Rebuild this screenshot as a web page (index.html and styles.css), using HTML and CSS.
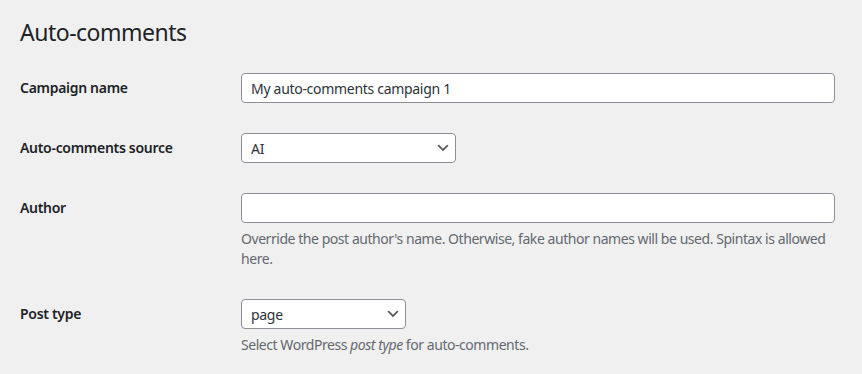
FILE: index.html
```html
<!DOCTYPE html>
<html lang="en">
<head>
  <meta charset="UTF-8">
  <meta name="viewport" content="width=device-width, initial-scale=1.0">
  <title>Auto-comments</title>
  <link rel="stylesheet" href="styles.css">
</head>
<body>
  <div class="wrap">
    <h1>Auto-comments</h1>

    <form class="form-table">
      <div class="row">
        <label class="row-label" for="campaign-name">Campaign name</label>
        <div class="row-field">
          <input class="text-input wide" id="campaign-name" type="text" value="My auto-comments campaign 1">
        </div>
      </div>

      <div class="row">
        <label class="row-label" for="source">Auto-comments source</label>
        <div class="row-field">
          <div class="select-box source">
            <select id="source">
              <option selected>AI</option>
              <option>Templates</option>
            </select>
            <svg class="chevron" viewBox="0 0 20 20"><path d="M5 6l5 5 5-5 2 1-7 7-7-7 2-1z"/></svg>
          </div>
        </div>
      </div>

      <div class="row">
        <label class="row-label" for="author">Author</label>
        <div class="row-field">
          <input class="text-input wide" id="author" type="text" value="">
          <p class="description">Override the post author's name. Otherwise, fake author names will be used. Spintax is allowed here.</p>
        </div>
      </div>

      <div class="row">
        <label class="row-label" for="post-type">Post type</label>
        <div class="row-field">
          <div class="select-box post-type">
            <select id="post-type">
              <option>post</option>
              <option selected>page</option>
            </select>
            <svg class="chevron" viewBox="0 0 20 20"><path d="M5 6l5 5 5-5 2 1-7 7-7-7 2-1z"/></svg>
          </div>
          <p class="description">Select WordPress <em>post type</em> for auto-comments.</p>
        </div>
      </div>
    </form>
  </div>
</body>
</html>
```

FILE: styles.css
```css
body {
  margin: 0;
  background-color: #f0f0f1;
  color: #1d2327;
  font-family: "Noto Sans", "Open Sans", sans-serif;
  font-size: 14px;
  letter-spacing: -0.3px;
  overflow: hidden;
}

.wrap {
  padding: 17px 0 0 20px;
}

h1 {
  margin: 0;
  font-size: 23px;
  font-weight: 400;
  line-height: 30px;
  letter-spacing: -0.5px;
}

.form-table {
  margin-top: 11px;
}

.row {
  display: flex;
}

.row-label {
  width: 200px;
  padding: 20px 10px 20px 0;
  font-weight: 600;
  line-height: 20px;
  flex-shrink: 0;
}

.row-field {
  width: 594px;
  padding: 15px 10px 15px 11px;
}

.text-input,
select {
  box-sizing: border-box;
  height: 30px;
  border: 1px solid #8c8f94;
  border-radius: 4px;
  background-color: #fff;
  color: #2c3338;
  font-family: inherit;
  font-size: 14px;
  letter-spacing: -0.3px;
  margin: 0;
  display: block;
}

.text-input {
  padding: 0 9px;
}

.wide {
  width: 594px;
}

.select-box {
  position: relative;
}

.select-box select {
  width: 100%;
  padding: 0 24px 0 9px;
  appearance: none;
  -webkit-appearance: none;
}

.source {
  width: 215px;
}

.post-type {
  width: 165px;
}

.chevron {
  position: absolute;
  right: 5px;
  top: 7px;
  width: 16px;
  height: 16px;
  fill: #555;
  pointer-events: none;
}

.description {
  margin: 6px 0 1px 0;
  color: #646970;
  line-height: 19.5px;
  letter-spacing: -0.45px;
}
```
